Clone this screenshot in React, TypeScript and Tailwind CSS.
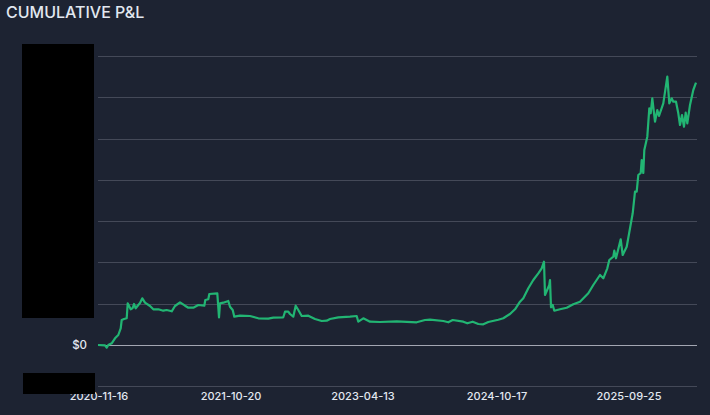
const gridLines = [56.5, 97.5, 139.5, 180.5, 221.5, 262.5, 304.5, 386.5];

const xTicks = [
  { label: '2020-11-16', x: 99 },
  { label: '2021-10-20', x: 231 },
  { label: '2023-04-13', x: 363 },
  { label: '2024-10-17', x: 497 },
  { label: '2025-09-25', x: 629 },
];

// traced from the reference, in page pixels
const pnl = [
  [98, 345], [105, 345.3], [106.7, 347.7], [108.3, 345], [111.7, 343.3], [115, 338.3], [118.3, 335], [120.7, 328.3],
  [121.7, 320], [124, 319], [126.7, 318.3], [127.7, 303.3], [130.7, 309.3], [132.7, 308], [134, 304], [135.7, 308.3],
  [138.3, 305], [140, 303], [142.3, 298.3], [145, 302.7], [150, 306], [153.3, 309.3], [158.3, 309.3], [163.3, 310.7],
  [166.7, 310], [171.7, 311.3], [175, 306], [180, 302.3], [185, 305.7], [188.3, 307.7], [193.3, 307.7], [198.3, 305],
  [204.3, 305.7], [205.3, 300], [208.3, 299.3], [209.3, 294], [217.3, 293.3], [219, 317.3], [220, 303.3], [223.3, 302.7],
  [228.3, 301], [230, 306.7], [232.7, 310], [234.3, 316.7], [240, 315.7], [250, 316], [258.3, 318.3], [268.3, 318.7],
  [273.3, 317.7], [283.3, 317.3], [285, 311.7], [288.3, 311.7], [290, 314], [293.3, 316.7], [295.7, 305.7], [298.3, 310],
  [301.7, 316], [308.3, 315.7], [315, 319], [321.7, 321], [326.7, 320.7], [330, 319], [338.3, 317.3], [350, 316.7],
  [356.7, 316], [358.3, 321.7], [363.3, 318.3], [370, 321.7], [380, 322], [396.7, 321.3], [416.7, 322.3], [425, 320],
  [430, 319.7], [443.3, 321], [448.3, 322.3], [452.7, 320], [463.3, 321.7], [467.3, 323.3], [472.7, 321.7], [478.3, 324],
  [483.3, 324.3], [488.3, 322], [498.3, 319.7], [503.3, 318.3], [510, 314], [515, 309.3], [520, 301.7], [523.3, 298.3],
  [528.3, 288.3], [533.3, 280], [538.3, 273.3], [541.7, 268.3], [544, 261.7], [545, 295], [549.3, 285], [550, 280],
  [551, 307.3], [552.7, 305], [554.3, 310.7], [560, 309.3], [566.7, 307.7], [573.3, 304.3], [580, 301.7], [588.3, 293.3],
  [593.3, 285], [600, 275], [603.3, 278.3], [607.3, 268.3], [609.3, 260], [613.3, 256.7], [614.3, 250.7], [616, 258.3],
  [620.7, 239.3], [622.7, 255], [626.7, 246.7], [632.7, 213.3], [635, 191.7], [636.7, 191.7], [638.3, 175], [640.7, 173],
  [641.7, 160], [643.3, 173], [644.3, 150], [647.3, 136.7], [649.3, 108.3], [650.7, 113.3], [652.3, 98.3], [655, 121.7],
  [657.3, 110], [659, 116], [663.3, 103.3], [667.3, 76.7], [669.3, 103.3], [671.7, 98.3], [673.3, 101.7], [676, 101.7],
  [678.3, 113.3], [680, 125], [682, 115], [684, 126.7], [685.7, 112.7], [687.3, 123.3], [690, 105], [693.3, 90], [696, 82.7],
];

export default function App() {
  return (
    <div className="h-[415px] w-full overflow-hidden bg-[#1d2332] font-['Inter',sans-serif]">
      <h1 className="h-[30px] px-1.5 pt-[2px] text-base leading-5 font-medium text-[#e2e8f0]">CUMULATIVE P&amp;L</h1>

      <div className="relative h-[385px]">
        <svg viewBox="0 30 710 385" className="block h-full w-full">
          {gridLines.map((y) => (
            <line key={y} x1={98} x2={697} y1={y} y2={y} stroke="#444958" strokeWidth={1} />
          ))}
          <line x1={98} x2={697} y1={345.5} y2={345.5} stroke="#a3a6b2" strokeWidth={1} />

          <polyline
            points={pnl.map((p) => p.join(',')).join(' ')}
            fill="none"
            stroke="#22b573"
            strokeWidth={2.2}
            strokeLinejoin="round"
          />

          <text x={87} y={349} textAnchor="end" fontSize={11.5} fontWeight={500} fill="#e2e8f0">
            $0
          </text>
          {xTicks.map((t) => (
            <text key={t.label} x={t.x} y={400} textAnchor="middle" fontSize={11} fontWeight={500} fill="#e2e8f0">
              {t.label}
            </text>
          ))}
        </svg>

        {/* redaction blocks over the y axis labels */}
        <div className="absolute top-[14px] left-[22px] h-[274px] w-[72px] bg-black" />
        <div className="absolute top-[343px] left-[23px] h-[21px] w-[72px] bg-black" />
      </div>
    </div>
  );
}
